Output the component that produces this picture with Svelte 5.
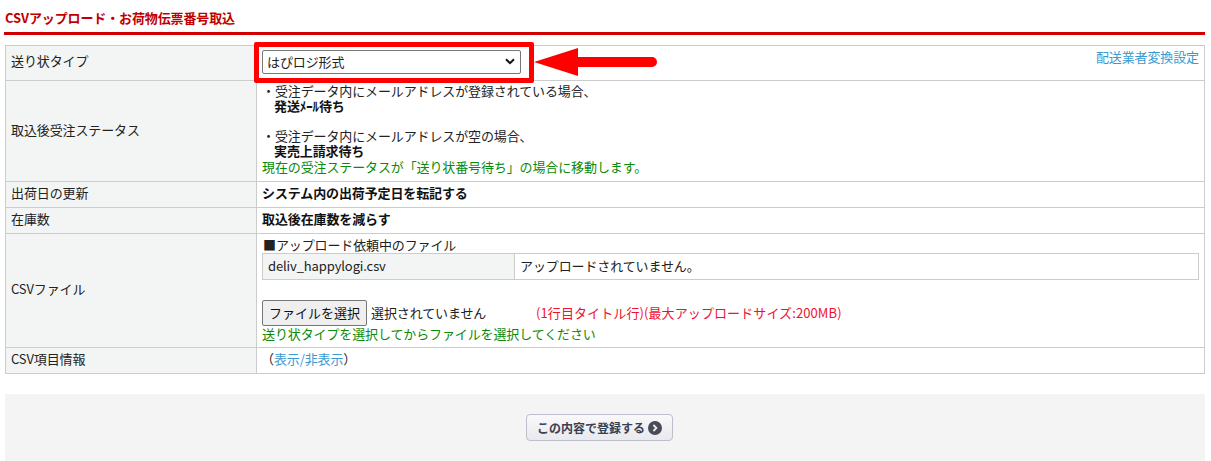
<script lang="ts">
  const rows = { type: '送り状タイプ', status: '取込後受注ステータス' };
</script>

<div class="page">
  <h2 class="title">CSVアップロード・お荷物伝票番号取込</h2>

  <table class="form">
    <tbody>
      <tr class="r-type">
        <th>{rows.type}</th>
        <td class="type-cell">
          <div class="type-row">
            <div class="select-box"><span>はぴロジ形式</span>
              <svg class="chev" width="10" height="7" viewBox="0 0 10 7"><path d="M1 1.2 5 5.2 9 1.2" fill="none" stroke="#111" stroke-width="2"/></svg>
            </div>
            <a class="link" href="#top">配送業者変換設定</a>
          </div>
          <div class="highlight"></div>
          <svg class="arrow" width="126" height="30" viewBox="0 0 126 30">
            <path d="M0 15 44 1V10H118a5 5 0 0 1 0 10H44V29Z" fill="#f00"/>
          </svg>
        </td>
      </tr>
      <tr class="r-status">
        <th>{rows.status}</th>
        <td class="status">
          <div class="line">・受注データ内にメールアドレスが登録されている場合、</div>
          <div class="line strong">発送ﾒｰﾙ待ち</div>
          <div class="line">&nbsp;</div>
          <div class="line">・受注データ内にメールアドレスが空の場合、</div>
          <div class="line strong">実売上請求待ち</div>
          <div class="green moved">現在の受注ステータスが「送り状番号待ち」の場合に移動します。</div>
        </td>
      </tr>
      <tr class="r-small">
        <th>出荷日の更新</th>
        <td><b>システム内の出荷予定日を転記する</b></td>
      </tr>
      <tr class="r-small">
        <th>在庫数</th>
        <td><b>取込後在庫数を減らす</b></td>
      </tr>
      <tr class="r-file">
        <th>CSVファイル</th>
        <td class="file-cell">
          <div class="upload-head">■アップロード依頼中のファイル</div>
          <div class="upload-table">
            <div class="name">deliv_happylogi.csv</div>
            <div class="state">アップロードされていません。</div>
          </div>
          <div class="picker">
            <button class="pick" type="button">ファイルを選択</button>
            <span class="none">選択されていません</span>
            <span class="limit">(1行目タイトル行)(最大アップロードサイズ:200MB)</span>
          </div>
          <div class="green">送り状タイプを選択してからファイルを選択してください</div>
        </td>
      </tr>
      <tr class="r-small">
        <th>CSV項目情報</th>
        <td><span class="toggle">（<a class="link" href="#top">表示/非表示</a>）</span></td>
      </tr>
    </tbody>
  </table>

  <div class="footer">
    <button class="submit" type="button">この内容で登録する
      <svg width="14" height="14" viewBox="0 0 14 14"><circle cx="7" cy="7" r="7" fill="#4a4a58"/><path d="M5.4 4 8.4 7 5.4 10" fill="none" stroke="#eee" stroke-width="1.8"/></svg>
    </button>
  </div>
</div>

<style>
  :global(body) {
    margin: 0;
    background: #fff;
  }
  .page {
    height: 461px;
    overflow: hidden;
    padding: 0 6px 0 5px;
    font-family: "Noto Sans CJK JP", "Liberation Sans", sans-serif;
    font-size: 13px;
    letter-spacing: -0.12px;
    color: #222;
  }
  .title {
    margin: 0 0 10px -1px;
    height: 35px;
    box-sizing: border-box;
    padding: 10px 0 0 1px;
    border-bottom: 3px solid #d00000;
    font-size: 13px;
    line-height: 16px;
    font-weight: 700;
    color: #c00000;
  }
  .form {
    width: 1200px;
    border-collapse: collapse;
    table-layout: fixed;
  }
  th, td {
    border: 1px solid #ccc;
    padding: 0 5px 4px;
    line-height: 17px;
    text-align: left;
    vertical-align: middle;
  }
  th {
    width: 240px;
    background: #f3f5f5;
    font-weight: 400;
  }
  .r-type th {
    height: 28px;
    padding-bottom: 6px;
  }
  .r-type td { height: 34px; padding-bottom: 0; }
  .r-status th { height: 96px; }
  .r-status td { height: 98px; }
  .r-small th, .r-small td { height: 21px; }
  .r-file th { height: 109px; }
  .r-file td { height: 111px; }
  .type-cell {
    position: relative;
  }
  .type-row {
    display: flex;
    justify-content: space-between;
    align-items: flex-start;
    height: 34px;
  }
  .select-box {
    box-sizing: border-box;
    width: 259px;
    height: 24px;
    margin-top: 4px;
    padding: 0 5px 2px 4px;
    display: flex;
    align-items: center;
    justify-content: space-between;
    border: 1px solid #767676;
    border-radius: 2px;
    background: #fff;
    color: #222;
  }
  .link {
    color: #3a9ad0;
    text-decoration: none;
  }
  .type-row > .link {
    margin-top: 2px;
  }
  .highlight {
    position: absolute;
    left: -3px;
    top: -4px;
    width: 280px;
    height: 41px;
    box-sizing: border-box;
    border: 5px solid #f00;
    border-radius: 2px;
  }
  .arrow {
    position: absolute;
    left: 277px;
    top: 1px;
  }
  .status {
    padding-top: 2px;
    padding-bottom: 0;
    vertical-align: top;
  }
  .line {
    height: 15px;
    line-height: 15px;
    white-space: nowrap;
  }
  .strong {
    padding-left: 12px;
    font-weight: 700;
    color: #111;
  }
  .green {
    color: #0a8a0a;
    line-height: 15px;
  }
  .moved {
    margin-top: 1px;
  }
  b {
    color: #111;
  }
  .file-cell {
    vertical-align: top;
    padding-top: 2px;
    padding-bottom: 0;
  }
  .upload-head {
    padding-left: 1px;
    line-height: 17px;
  }
  .upload-table {
    display: grid;
    grid-template-columns: 252px 1fr;
    height: 27px;
    border: 1px solid #ccc;
    box-sizing: border-box;
  }
  .upload-table > div {
    padding: 0 5px;
    line-height: 23px;
  }
  .name {
    background: #f3f5f5;
    border-right: 1px solid #ccc;
  }
  .picker {
    display: flex;
    align-items: center;
    margin-top: 20px;
    height: 26px;
  }
  .pick {
    box-sizing: border-box;
    width: 105px;
    height: 26px;
    padding: 0 0 2px;
    border: 1px solid #767676;
    border-radius: 2px;
    background: #efefef;
    color: #111;
    font: inherit;
  }
  .none {
    margin-left: 4px;
    width: 165px;
    padding-bottom: 2px;
  }
  .limit {
    color: #f01030;
    padding-bottom: 2px;
    letter-spacing: 0.1px;
  }
  .toggle {
    margin-left: -1px;
  }
  .footer {
    margin-top: 20px;
    height: 67px;
    width: 1200px;
    background: #f4f4f5;
    display: flex;
    justify-content: center;
    padding: 20px 11px 0 0;
    box-sizing: border-box;
  }
  .submit {
    box-sizing: border-box;
    width: 147px;
    height: 27px;
    display: flex;
    align-items: center;
    justify-content: center;
    gap: 3px;
    padding: 0;
    border: 1px solid #bcbecb;
    border-radius: 4px;
    background: linear-gradient(#f9f9fb, #e9e9ee);
    color: #3c3f50;
    font: 700 12px "Noto Sans CJK JP", "Liberation Sans", sans-serif;
  }
</style>
